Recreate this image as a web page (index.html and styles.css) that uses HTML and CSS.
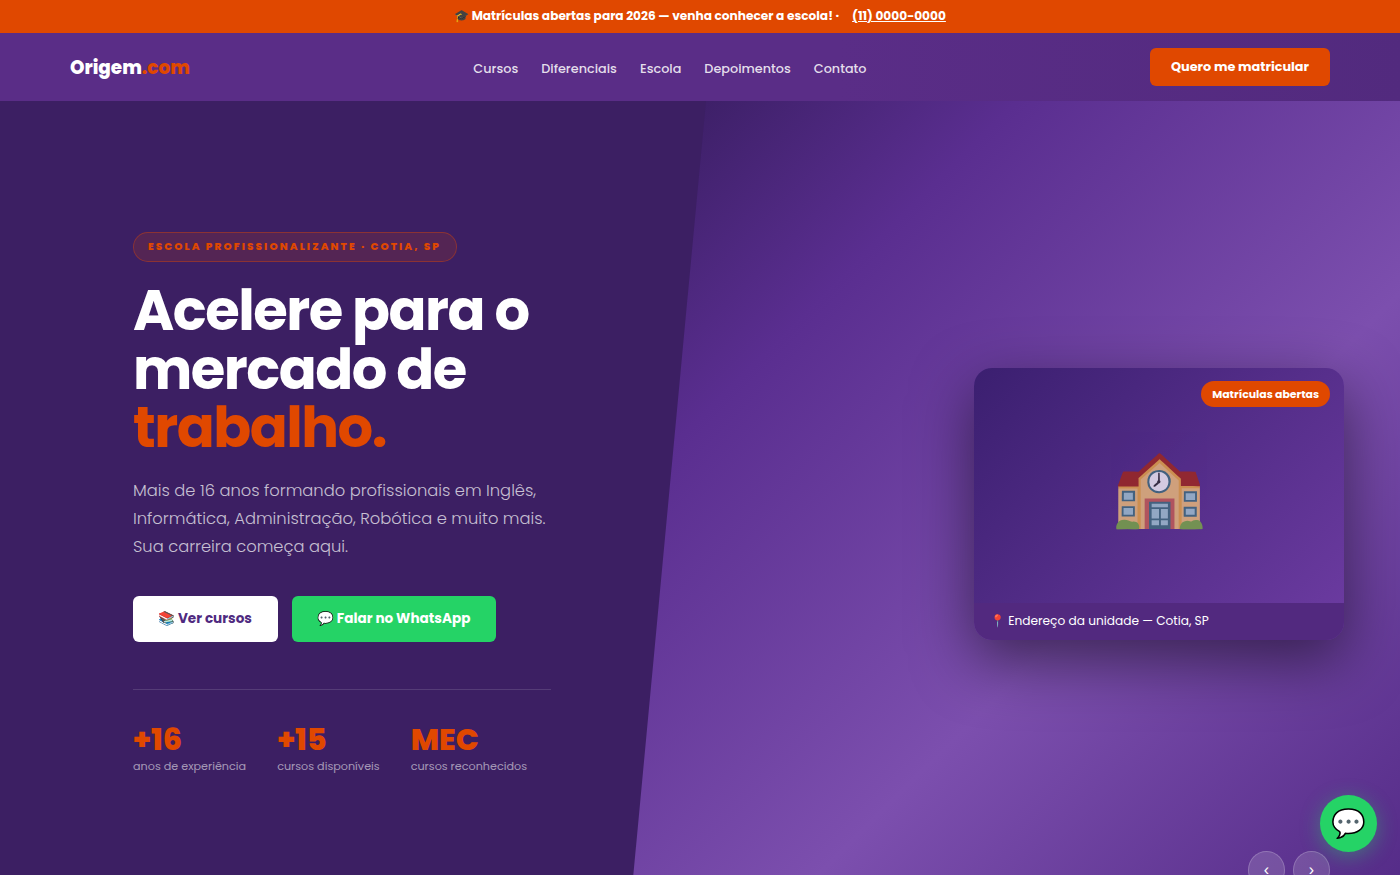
FILE: index.html
```html
<!DOCTYPE html>
<html lang="pt-BR">
<head>
    <meta charset="UTF-8">
    <meta name="viewport" content="width=device-width, initial-scale=1.0">
    <title>Origem.com - Escola Profissionalizante</title>
    <link rel="stylesheet" href="styles.css">
</head>
<body>

    <!-- Top announcement -->
    <div class="topbar">
        <span>🎓 Matrículas abertas para 2026 — venha conhecer a escola! ·</span>
        <a href="#" class="topbar-phone">(11) 0000-0000</a>
    </div>

    <!-- Navigation -->
    <header class="nav">
        <a href="#" class="logo">Origem<span>.com</span></a>
        <nav class="nav-links">
            <a href="#">Cursos</a>
            <a href="#">Diferenciais</a>
            <a href="#">Escola</a>
            <a href="#">Depoimentos</a>
            <a href="#">Contato</a>
        </nav>
        <a href="#" class="nav-cta">Quero me matricular</a>
    </header>

    <!-- Hero -->
    <section class="hero">
        <div class="hero-left">
            <span class="eyebrow">ESCOLA PROFISSIONALIZANTE · COTIA, SP</span>
            <h1>Acelere para o mercado de <em>trabalho.</em></h1>
            <p class="hero-text">Mais de 16 anos formando profissionais em Inglês, Informática, Administração, Robótica e muito mais. Sua carreira começa aqui.</p>
            <div class="hero-buttons">
                <a href="#" class="btn btn-white">📚 Ver cursos</a>
                <a href="#" class="btn btn-green">💬 Falar no WhatsApp</a>
            </div>
            <div class="stats">
                <div class="stat">
                    <strong>+16</strong>
                    <span>anos de experiência</span>
                </div>
                <div class="stat">
                    <strong>+15</strong>
                    <span>cursos disponíveis</span>
                </div>
                <div class="stat">
                    <strong>MEC</strong>
                    <span>cursos reconhecidos</span>
                </div>
            </div>
        </div>

        <div class="hero-right">
            <div class="card">
                <span class="card-badge">Matrículas abertas</span>
                <div class="card-picture"><span>🏫</span></div>
                <div class="card-footer">📍 Endereço da unidade — Cotia, SP</div>
            </div>
        </div>

        <!-- Carousel arrows -->
        <div class="arrows">
            <button type="button">‹</button>
            <button type="button">›</button>
        </div>
    </section>

    <a href="#" class="chat-button">💬</a>

</body>
</html>
```

FILE: styles.css
```css
/* Global Styles */
html, body {
    height: 875px;
    overflow: hidden;
}

body {
    margin: 0;
    font-family: Poppins, Inter, "Noto Sans", sans-serif;
    color: #fff;
    background-color: #3b1f63;
}

a {
    color: inherit;
    text-decoration: none;
}

/* Top announcement */
.topbar {
    height: 33px;
    box-sizing: border-box;
    padding-bottom: 1px;
    background-color: #e04800;
    display: flex;
    justify-content: center;
    align-items: center;
    gap: 13px;
    font-size: 12.16px;
    font-weight: 700;
}

.topbar-phone {
    text-decoration: underline;
}

/* Navigation */
.nav {
    height: 68px;
    background: linear-gradient(90deg, #5a2d87 0%, #5a2d87 60%, #522a7e 100%);
    display: flex;
    align-items: center;
    justify-content: space-between;
    padding: 0 70px;
}

.logo {
    font-size: 18.4px;
    font-weight: 800;
}

.logo span {
    color: #e04800;
}

.nav-links {
    display: flex;
    gap: 23px;
    margin-top: 3px;
    font-size: 12.8px;
    font-weight: 500;
    color: rgba(255, 255, 255, 0.85);
}

.nav-cta {
    background-color: #e04800;
    border-radius: 6px;
    width: 180px;
    height: 38px;
    padding-bottom: 1px;
    box-sizing: border-box;
    display: flex;
    justify-content: center;
    align-items: center;
    font-size: 12.8px;
    font-weight: 700;
}

/* Hero */
.hero {
    position: relative;
    height: 812px;
    display: flex;
    background: linear-gradient(135deg, #3c1f66 0%, #3c1f66 31%, #5a2e90 46%, #7c4fae 72%, #532a86 100%);
}

.hero-left {
    width: 706px;
    box-sizing: border-box;
    padding: 0 155px 7px 133px;
    background-color: #3c1f63;
    clip-path: polygon(0 0, 100% 0, 89.2% 100%, 0 100%);
    display: flex;
    flex-direction: column;
    justify-content: center;
    align-items: flex-start;
}

.eyebrow {
    padding: 0 15px 0 14px;
    height: 30px;
    box-sizing: border-box;
    display: flex;
    align-items: center;
    border: 1px solid rgba(224, 72, 0, 0.4);
    border-radius: 15px;
    background-color: rgba(224, 72, 0, 0.15);
    color: #e04800;
    font-size: 10.4px;
    font-weight: 800;
    letter-spacing: 2.1px;
    margin-bottom: 20px;
}

h1 {
    margin: 0 0 19px;
    font-size: 56px;
    line-height: 58.8px;
    font-weight: 700;
    letter-spacing: -1.5px;
}

h1 em {
    display: block;
    font-style: normal;
    color: #e04800;
}

.hero-text {
    margin: 0 0 36px;
    font-size: 16.32px;
    line-height: 1.7;
    font-weight: 300;
    color: rgba(255, 255, 255, 0.72);
}

.hero-buttons {
    display: flex;
    gap: 14px;
    margin-bottom: 47px;
}

.btn {
    height: 46px;
    padding: 0 26px 0 25px;
    display: flex;
    align-items: center;
    border-radius: 6px;
    font-size: 13.6px;
    font-weight: 700;
}

.btn-white {
    background-color: #fff;
    color: #4f2a80;
}

.btn-green {
    background-color: #25d366;
}

.stats {
    align-self: stretch;
    border-top: 1px solid rgba(255, 255, 255, 0.13);
    padding-top: 32px;
    display: flex;
    gap: 31px;
}

.stat strong {
    display: block;
    font-size: 30.4px;
    line-height: 36px;
    font-weight: 800;
    color: #e04800;
}

.stat span {
    display: block;
    font-size: 11.2px;
    line-height: 1.5;
    color: rgba(255, 255, 255, 0.55);
}

/* Card on the right */
.hero-right {
    flex: 1;
    display: flex;
    justify-content: flex-end;
    align-items: center;
    padding: 0 56px 6px 0;
}

.card {
    position: relative;
    width: 370px;
    border-radius: 18px;
    overflow: hidden;
    box-shadow: 0 20px 60px rgba(0, 0, 0, 0.5);
}

.card-badge {
    position: absolute;
    top: 13px;
    right: 14px;
    height: 26px;
    box-sizing: border-box;
    padding: 1px 11px 0;
    display: flex;
    align-items: center;
    border-radius: 13px;
    background-color: #e04800;
    font-size: 10.88px;
    font-weight: 700;
}

.card-picture {
    height: 235px;
    display: flex;
    justify-content: center;
    align-items: center;
    font-size: 76.8px;
    background: linear-gradient(135deg, #3b1f70 0%, #6a3a9f 100%);
}

.card-picture span {
    opacity: 0.75;
}

.card-footer {
    height: 37px;
    box-sizing: border-box;
    padding: 0 16px 2px;
    display: flex;
    align-items: center;
    gap: 4px;
    background-color: #52297f;
    font-size: 12.16px;
}

/* Carousel arrows */
.arrows {
    position: absolute;
    right: 70px;
    bottom: 24px;
    display: flex;
    gap: 8px;
}

.arrows button {
    width: 37px;
    height: 38px;
    border-radius: 50%;
    border: 1px solid rgba(255, 255, 255, 0.2);
    background-color: rgba(255, 255, 255, 0.15);
    color: #fff;
    font-size: 16px;
    padding: 0;
}

/* Floating chat button */
.chat-button {
    position: fixed;
    right: 23px;
    bottom: 23px;
    width: 57px;
    height: 57px;
    border-radius: 50%;
    background-color: #25d366;
    display: flex;
    justify-content: center;
    align-items: center;
    font-size: 28px;
    box-shadow: 0 4px 20px rgba(37, 211, 102, 0.4);
}
```
